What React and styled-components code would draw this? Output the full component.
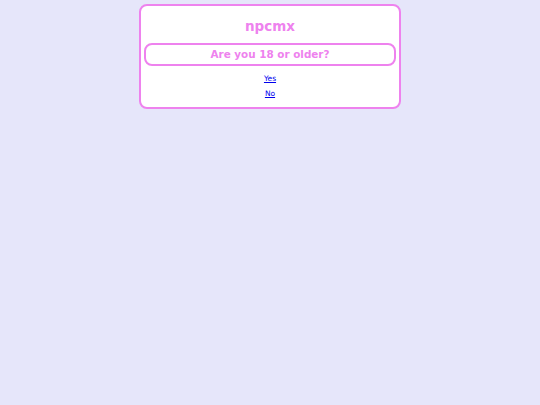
import React from "react";
import styled, { createGlobalStyle } from "styled-components";

const Global = createGlobalStyle`
  html, body { margin: 0; padding: 0; background: #e6e6fa; }
  body { font-family: "DejaVu Sans", sans-serif; }
  * { box-sizing: border-box; }
`;

const Page = styled.div`
  padding-top: 4px;
  display: flex;
  justify-content: center;
`;

const Card = styled.div`
  width: 262px;
  background: #fff;
  border: 2px solid #ee82ee;
  border-radius: 8px;
  padding: 10px 3px 8px;
  display: flex;
  flex-direction: column;
  align-items: stretch;
`;

const Title = styled.h1`
  margin: 0;
  text-align: center;
  color: #ee82ee;
  font-size: 13.5px;
  font-weight: bold;
  line-height: 20px;
`;

const Question = styled.h2`
  margin: 7px 0 0;
  border: 2px solid #ee82ee;
  border-radius: 8px;
  text-align: center;
  color: #ee82ee;
  font-size: 10.4px;
  font-weight: bold;
  line-height: 19px;
`;

const Links = styled.div`
  margin-top: 7px;
  display: flex;
  flex-direction: column;
  align-items: center;
  gap: 4px;
`;

const Choice = styled.a`
  font-size: 7.5px;
  line-height: 11px;
  color: #0000ee;
  text-decoration: underline;
`;

export default function App() {
  return (
    <>
      <Global />
      <Page>
        <Card>
          <Title>npcmx</Title>
          <Question>Are you 18 or older?</Question>
          <Links>
            <Choice href="#">Yes</Choice>
            <Choice href="#">No</Choice>
          </Links>
        </Card>
      </Page>
    </>
  );
}
